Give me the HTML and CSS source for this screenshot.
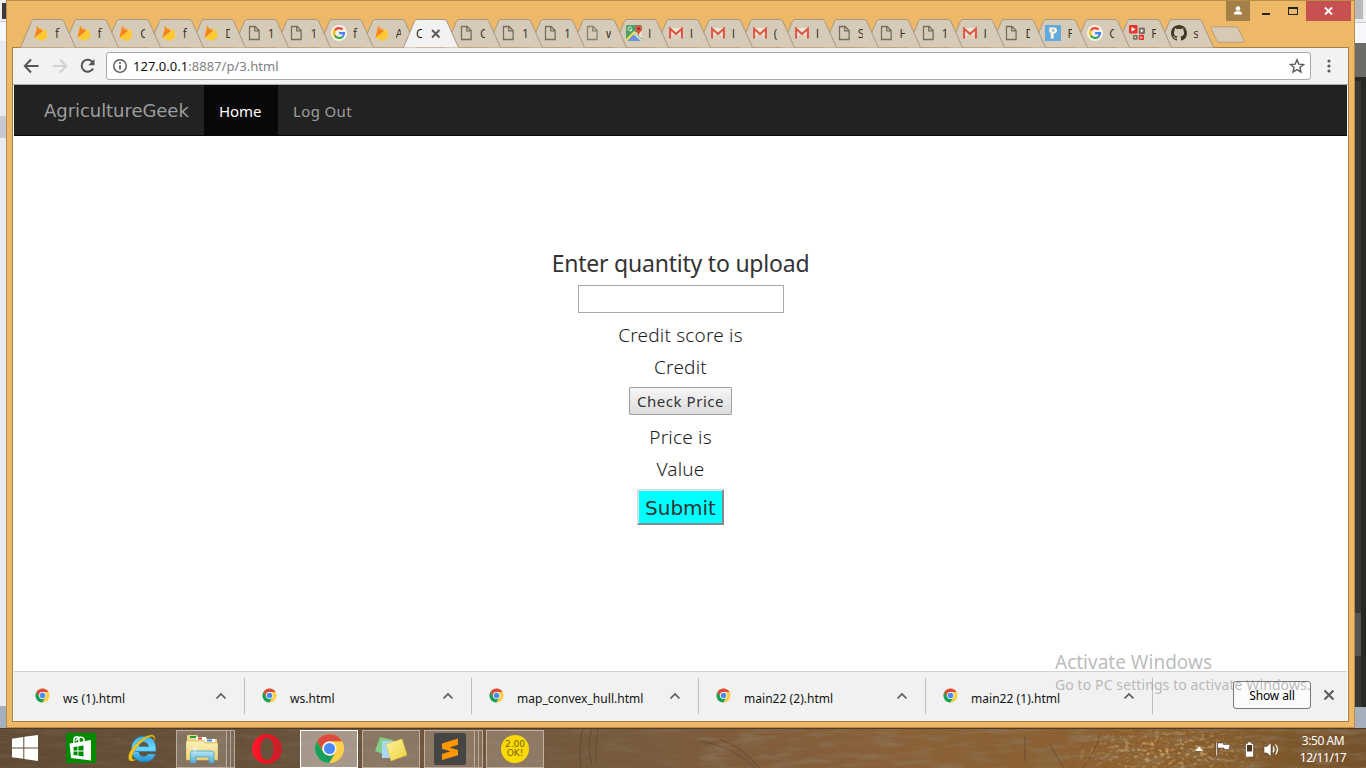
FILE: index.html
```html
<!DOCTYPE html>
<html lang="en">
<head>
<meta charset="utf-8">
<title>AgricultureGeek</title>
<link rel="stylesheet" href="styles.css">
</head>
<body>
<svg class="defs" width="0" height="0">
  <defs>
    <linearGradient id="opg" x1="0" x2="1"><stop offset="0" stop-color="#ff1b2d"/><stop offset=".3" stop-color="#f21425"/><stop offset="1" stop-color="#c5202b"/></linearGradient>
    <linearGradient id="ieg" x1="0" y1="0" x2="0" y2="1"><stop offset="0" stop-color="#3db4ea"/><stop offset=".5" stop-color="#6fd6fb"/><stop offset="1" stop-color="#1d8fd0"/></linearGradient>
    <linearGradient id="fol" x1="0" y1="0" x2="0" y2="1"><stop offset="0" stop-color="#fbf0b4"/><stop offset="1" stop-color="#ecd47a"/></linearGradient>
    <linearGradient id="stand" x1="0" y1="0" x2="0" y2="1"><stop offset="0" stop-color="#b9e6f8"/><stop offset="1" stop-color="#58a9cf"/></linearGradient>
    <linearGradient id="note" x1="0" y1="0" x2="1" y2="1"><stop offset="0" stop-color="#fbf3a0"/><stop offset="1" stop-color="#f0d23c"/></linearGradient>
    <symbol id="firebase" viewBox="0 0 16 16"><path d="M1.600 12.600 3.900 1c.1-.4.6-.5.8-.1l2.100 4 1.100-1.500c.2-.3.5-.3.7 0l5.100 9.200z" fill="#f89a1e"/><path d="M9.600 7.200 5 2.400 1.600 12.600z" fill="#f4811f"/><path d="m1.600 12.600 10.600-8.400c.3-.3.8-.1.9.3l1.500 8.100-5.700 3.100c-.4.2-.9.2-1.300 0z" fill="#fdc932"/></symbol>
    <symbol id="doc" viewBox="0 0 16 16"><path d="M3.500 1.500h5.600l4 4v9H3.500z M8.700 1.800v4h4" fill="none" stroke="#776e60" stroke-width="1.300"/></symbol>
    <symbol id="google" viewBox="0 0 16 16"><circle cx="8" cy="8" r="8" fill="#fbf1e2"/><path d="M3.900 5.300A5 5 0 0 1 11.600 4.500" fill="none" stroke="#ea4335" stroke-width="2.200"/><path d="M3.900 5.200a5 5 0 0 0 0 5.500" fill="none" stroke="#fbbc05" stroke-width="2.200"/><path d="M3.800 10.500a5 5 0 0 0 7.700 1.200" fill="none" stroke="#34a853" stroke-width="2.200"/><path d="M8.100 8.100H13A5 5 0 0 1 11.400 11.800" fill="none" stroke="#4285f4" stroke-width="2.200"/></symbol>
    <symbol id="maps" viewBox="0 0 16 16"><rect width="16" height="16" rx="1.500" fill="#4aa368"/><path d="m1 16 7-7 7 7z" fill="#6b94de"/><path d="m9 8 7 6V6h-4z" fill="#e8dfd0"/><path d="m0 15.500 9-9" stroke="#f6dc50" stroke-width="2.200"/><path d="m8 8.500 7.500 7" stroke="#f4efe4" stroke-width="1.400"/><path d="M5.700 2.800A2 2 0 1 0 6 4.400H4.300" stroke="#e7f3e4" fill="none"/><path d="M12.500 11c-.2-3-3.200-4.500-3.200-7.500a3.300 3.300 0 0 1 6.600 0c0 3-3.200 4.500-3.400 7.500z" fill="#de5543"/><circle cx="12.600" cy="3.600" r="1.200" fill="#83231c"/></symbol>
    <symbol id="gmail" viewBox="0 0 16 16"><path d="M1.500 3h13v10.500h-13z" fill="#efe3d2"/><path d="m1.500 13.500 5-5 1.500 1.200 1.500-1.200 5 5z" fill="#ddcfbb"/><path d="M2.100 13.500V3.800L8 9l5.900-5.200v9.700" fill="none" stroke="#dd5140" stroke-width="2"/></symbol>
    <symbol id="pin" viewBox="0 0 16 16"><rect width="16" height="16" fill="#62a9dc"/><path d="M5.700 13.500V8.500L4.300 6.500V2.500h5.200c3.400 0 3.400 6 0 6H8.700v5z" fill="#fff3df"/><path d="M7.300 4.300h1.900v2.300H7.300z" fill="#62a9dc"/></symbol>
    <symbol id="play" viewBox="0 0 16 16"><rect width="8.500" height="8.500" rx="1" fill="#e5352c"/><path d="m2.500 2 4.200 2.200-4.200 2.200z" fill="#fff"/><rect x="9.800" y="2.500" width="6.200" height="6.500" rx="1" fill="#7c6f60"/><path d="m11.700 4 3 1.800-3 1.800z" fill="#fff"/><rect x="4" y="10" width="4.700" height="4.700" rx="1" fill="#7c6f60"/><rect x="5.500" y="11.500" width="1.600" height="1.600" fill="#ddd"/><rect x="9.800" y="9.800" width="5.200" height="5.200" rx="1" fill="#e5352c"/><path d="m11.400 11.200 2.400 1.300-2.400 1.300z" fill="#fff"/></symbol>
    <symbol id="github" viewBox="0 0 16 16"><path d="M8 0C3.580 0 0 3.580 0 8c0 3.540 2.290 6.530 5.470 7.590.4.070.55-.17.55-.38 0-.19-.01-.82-.01-1.490-2.010.37-2.530-.49-2.690-.94-.09-.23-.48-.94-.82-1.130-.28-.15-.68-.52-.01-.53.63-.01 1.080.58 1.230.82.72 1.210 1.870.87 2.330.66.070-.52.28-.87.51-1.070-1.780-.2-3.640-.89-3.640-3.950 0-.87.31-1.590.82-2.150-.08-.2-.36-1.020.08-2.120 0 0 .67-.21 2.200.82a7.600 7.600 0 0 1 4 0c1.530-1.040 2.200-.82 2.200-.82.44 1.100.16 1.920.08 2.120.51.56.82 1.270.82 2.150 0 3.070-1.870 3.750-3.650 3.950.29.25.54.73.54 1.480 0 1.070-.01 1.930-.01 2.200 0 .21.15.46.55.38A8 8 0 0 0 16 8c0-4.420-3.580-8-8-8z" fill="#433728"/></symbol>
    <symbol id="chrome" viewBox="0 0 32 32"><circle cx="16" cy="16" r="15" fill="#fdd04b"/><path d="M3 8.500A15 15 0 0 1 29 8.500H16A7.500 7.500 0 0 0 9.500 19.700z" fill="#db4c3f"/><path d="M3 8.500A15 15 0 0 0 15.500 31l7-11.500A7.500 7.500 0 0 1 9.500 19.700z" fill="#16a05e"/><circle cx="16" cy="16" r="7.300" fill="#f6f6f6"/><circle cx="16" cy="16" r="5.700" fill="#4a8af4"/></symbol>
    <symbol id="tabshape" viewBox="0 0 56 29"><path d="M.5 28.500 11.500 2.300Q12.500 .5 14 .5H41Q43 .5 43.800 2.300L55.500 28.500" fill="var(--tab)" stroke="var(--edge)"/></symbol>
  </defs>
</svg>

<div class="desktop">
  <div class="behind-left"><i class="bl1"></i><i class="bl2"></i><i class="bl3"></i><i class="bl5"></i><i class="bl4"></i></div>
  <div class="behind-right"><i class="br1"></i><i class="br2"></i><i class="br3"></i><i class="br4"></i><i class="br5"></i></div>

  <div class="window">
    <div class="controls">
      <span class="user"><svg width="24" height="20"><circle cx="12" cy="7.500" r="2.300" fill="#fff"/><path d="M8 13.500v-1.200c0-2.600 8-2.600 8 0v1.200z" fill="#fff"/></svg></span>
      <span class="ctl min"><i></i></span>
      <span class="ctl max"><i></i></span>
      <span class="close"><svg width="10" height="10"><path d="m1 1.500 7 7m0-7-7 7" stroke="#fff" stroke-width="1.800"/></svg></span>
    </div>

    <div class="tabs">
      <div class="tab a"><svg class="shape"><use href="#tabshape"/></svg><svg class="fav"><use href="#firebase"/></svg><span>f</span></div>
      <div class="tab a"><svg class="shape"><use href="#tabshape"/></svg><svg class="fav"><use href="#firebase"/></svg><span>f</span></div>
      <div class="tab a"><svg class="shape"><use href="#tabshape"/></svg><svg class="fav"><use href="#firebase"/></svg><span>C</span></div>
      <div class="tab a"><svg class="shape"><use href="#tabshape"/></svg><svg class="fav"><use href="#firebase"/></svg><span>f</span></div>
      <div class="tab a"><svg class="shape"><use href="#tabshape"/></svg><svg class="fav"><use href="#firebase"/></svg><span>D</span></div>
      <div class="tab a"><svg class="shape"><use href="#tabshape"/></svg><svg class="fav"><use href="#doc"/></svg><span>1</span></div>
      <div class="tab a"><svg class="shape"><use href="#tabshape"/></svg><svg class="fav"><use href="#doc"/></svg><span>1</span></div>
      <div class="tab a"><svg class="shape"><use href="#tabshape"/></svg><svg class="fav"><use href="#google"/></svg><span>f</span></div>
      <div class="tab a"><svg class="shape"><use href="#tabshape"/></svg><svg class="fav"><use href="#firebase"/></svg><span>A</span></div>
      <div class="tab active"><svg class="shape"><use href="#tabshape"/></svg><span>C</span><svg class="x" width="10" height="10"><path d="m1 1 7.500 7.500m0-7.500L1 8.500" stroke="#5a5a5a" stroke-width="1.900"/></svg></div>
      <div class="tab b"><svg class="shape"><use href="#tabshape"/></svg><svg class="fav"><use href="#doc"/></svg><span>C</span></div>
      <div class="tab b"><svg class="shape"><use href="#tabshape"/></svg><svg class="fav"><use href="#doc"/></svg><span>1</span></div>
      <div class="tab b"><svg class="shape"><use href="#tabshape"/></svg><svg class="fav"><use href="#doc"/></svg><span>1</span></div>
      <div class="tab b dim"><svg class="shape"><use href="#tabshape"/></svg><svg class="fav"><use href="#doc"/></svg><span>w</span></div>
      <div class="tab b"><svg class="shape"><use href="#tabshape"/></svg><svg class="fav"><use href="#maps"/></svg><span>I</span></div>
      <div class="tab b"><svg class="shape"><use href="#tabshape"/></svg><svg class="fav"><use href="#gmail"/></svg><span>I</span></div>
      <div class="tab b"><svg class="shape"><use href="#tabshape"/></svg><svg class="fav"><use href="#gmail"/></svg><span>I</span></div>
      <div class="tab b"><svg class="shape"><use href="#tabshape"/></svg><svg class="fav"><use href="#gmail"/></svg><span>(</span></div>
      <div class="tab b"><svg class="shape"><use href="#tabshape"/></svg><svg class="fav"><use href="#gmail"/></svg><span>I</span></div>
      <div class="tab b"><svg class="shape"><use href="#tabshape"/></svg><svg class="fav"><use href="#doc"/></svg><span>S</span></div>
      <div class="tab b"><svg class="shape"><use href="#tabshape"/></svg><svg class="fav"><use href="#doc"/></svg><span>H</span></div>
      <div class="tab b"><svg class="shape"><use href="#tabshape"/></svg><svg class="fav"><use href="#doc"/></svg><span>1</span></div>
      <div class="tab b"><svg class="shape"><use href="#tabshape"/></svg><svg class="fav"><use href="#gmail"/></svg><span>I</span></div>
      <div class="tab b"><svg class="shape"><use href="#tabshape"/></svg><svg class="fav"><use href="#doc"/></svg><span>D</span></div>
      <div class="tab b"><svg class="shape"><use href="#tabshape"/></svg><svg class="fav"><use href="#pin"/></svg><span>F</span></div>
      <div class="tab b"><svg class="shape"><use href="#tabshape"/></svg><svg class="fav"><use href="#google"/></svg><span>C</span></div>
      <div class="tab b"><svg class="shape"><use href="#tabshape"/></svg><svg class="fav"><use href="#play"/></svg><span>F</span></div>
      <div class="tab b"><svg class="shape"><use href="#tabshape"/></svg><svg class="fav"><use href="#github"/></svg><span>s</span></div>
      <svg class="newtab" width="36" height="18"><path d="M2.500 .8H25.500Q27.500 .8 28.300 2.500L34 14.500Q34.500 16.300 33 16.300H9.500Q7.500 16.300 6.700 14.500L1 2.500Q.5 .8 2.500 .8z" fill="#d6cab6" stroke="#bb9f72"/></svg>
    </div>

    <div class="frame">
      <div class="toolbar">
        <svg class="nav-icons" width="90" height="36"><g fill="none" stroke-width="2"><path d="M25.500 18H12M18 11.500 11.800 18l6.200 6.500" stroke="#555"/><path d="M40 18h13.500M47 11.500l6.200 6.500-6.200 6.500" stroke="#d0d0d0"/><path d="M79.500 14.200A6 6 0 1 0 80 20.500" stroke="#555"/></g><path d="M81.500 11v6.200h-6.200z" fill="#555"/></svg>
        <div class="omnibox">
          <svg width="16" height="16"><circle cx="8" cy="8" r="6.300" fill="none" stroke="#5a5a5a" stroke-width="1.400"/><path d="M8 7.200v4.300M8 4.300V6" stroke="#5a5a5a" stroke-width="1.700"/></svg>
          <span class="url"><b>127.0.0.1</b>:8887/p/3.html</span>
          <svg class="star" width="16" height="16"><path d="m8 1.800 1.800 4.300 4.700.4-3.600 3 1.100 4.600L8 11.600l-4 2.500 1.100-4.600-3.600-3 4.700-.4z" fill="none" stroke="#5a5a5a" stroke-width="1.400"/></svg>
        </div>
        <svg class="menu" width="6" height="16"><g fill="#5a5a5a"><circle cx="3" cy="3" r="1.600"/><circle cx="3" cy="8" r="1.600"/><circle cx="3" cy="13" r="1.600"/></g></svg>
      </div>

      <nav class="navbar">
        <a class="brand">AgricultureGeek</a>
        <a class="item on">Home</a>
        <a class="item">Log Out</a>
      </nav>

      <main class="page">
        <div class="title">Enter quantity to upload</div>
        <input class="qty" type="text">
        <div class="line l1">Credit score is</div>
        <div class="line l2">Credit</div>
        <button class="check">Check Price</button>
        <div class="line l3">Price is</div>
        <div class="line l4">Value</div>
        <button class="submit">Submit</button>
      </main>

      <div class="shelf">
        <div class="dl"><svg class="ci"><use href="#chrome"/></svg><span>ws (1).html</span><svg class="up" width="12" height="8"><path d="m1.500 6.500 4.500-4.500 4.500 4.500" fill="none" stroke="#5a5a5a" stroke-width="1.700"/></svg></div>
        <div class="dl"><svg class="ci"><use href="#chrome"/></svg><span>ws.html</span><svg class="up" width="12" height="8"><path d="m1.500 6.500 4.500-4.500 4.500 4.500" fill="none" stroke="#5a5a5a" stroke-width="1.700"/></svg></div>
        <div class="dl"><svg class="ci"><use href="#chrome"/></svg><span>map_convex_hull.html</span><svg class="up" width="12" height="8"><path d="m1.500 6.500 4.500-4.500 4.500 4.500" fill="none" stroke="#5a5a5a" stroke-width="1.700"/></svg></div>
        <div class="dl"><svg class="ci"><use href="#chrome"/></svg><span>main22 (2).html</span><svg class="up" width="12" height="8"><path d="m1.500 6.500 4.500-4.500 4.500 4.500" fill="none" stroke="#5a5a5a" stroke-width="1.700"/></svg></div>
        <div class="dl"><svg class="ci"><use href="#chrome"/></svg><span>main22 (1).html</span><svg class="up" width="12" height="8"><path d="m1.500 6.500 4.500-4.500 4.500 4.500" fill="none" stroke="#5a5a5a" stroke-width="1.700"/></svg></div>
        <button class="showall">Show all</button>
        <svg class="sx" width="12" height="12"><path d="m1.500 1.500 9 9m0-9-9 9" stroke="#5a5a5a" stroke-width="2"/></svg>
      </div>
    </div>
  </div>

  <div class="watermark"><div class="w1">Activate Windows</div><div class="w2">Go to PC settings to activate Windows.</div></div>

  <div class="taskbar">
    <svg class="wall" width="1366" height="40">
      <defs>
        <filter id="grain" x="0" y="0" width="1" height="1"><feTurbulence type="fractalNoise" baseFrequency=".03 .16" numOctaves="5" seed="8"/><feColorMatrix values="0 0 0 0 .27  0 0 0 0 .2  0 0 0 0 .12  2.600 0 0 0 -1.150"/></filter>
        <filter id="leaf" x="0" y="0" width="1" height="1"><feTurbulence type="fractalNoise" baseFrequency=".2 .3" numOctaves="3" seed="4"/><feColorMatrix values="0 0 0 0 .8  0 0 0 0 .5  0 0 0 0 .22  0 5 0 0 -2.600"/></filter>
        <radialGradient id="fade"><stop offset="0" stop-color="#fff"/><stop offset="1" stop-color="#000"/></radialGradient>
        <mask id="lm"><ellipse cx="1170" cy="22" rx="120" ry="30" fill="url(#fade)"/></mask>
      </defs>
      <rect width="1366" height="40" filter="url(#grain)" opacity=".25"/>
      <rect x="700" width="666" height="40" filter="url(#grain)" opacity=".4"/>
      <g mask="url(#lm)"><rect x="1000" width="366" height="40" filter="url(#leaf)" opacity=".75"/></g>
      <g fill="none" stroke="#4a3624" opacity=".45"><path d="M583 0q-5 15-2 40M592 0q-6 15 0 35M598 0q-3 15-2 34M700 12q30 4 57 28M720 10q25 10 40 30M1050 15l14 25M1100 5q-4 18-18 35M1025 8v24"/></g>
    </svg>
    <div class="slot start"><svg width="26" height="26"><path d="M0 3.700 11.300 2v10.400H0zM12.300 1.800 26 0v12.400H12.300zM0 13.500h11.300v10.300L0 22.200zM12.300 13.500H26V26l-13.700-1.900z" fill="#fff"/></svg></div>
    <div class="slot store"><svg width="30" height="30"><rect width="30" height="30" fill="#008a00"/><path d="M3.500 10.500 25 7v20.500L5 25z" fill="#fff"/><path d="M8 11V6.500c0-3 5-4 5-.5V9M10 8c1-4 8-5.500 8-1v3" fill="none" stroke="#fff" stroke-width="1.500"/><path d="m7.500 14 4-.6v4.100h-4zm4.900-.7 5.100-.8v5h-5.100zM7.500 18.400h4v4.100l-4-.5zm4.900 0h5.100v5l-5.100-.7z" fill="#008a00"/></svg></div>
    <div class="slot ie"><svg width="30" height="30"><path d="M8 18.500H28.800C30 9 25 3.200 17 3.200 9 3.200 4.500 9 4.500 16c0 8 5.500 13 12.500 13 6 0 10-3 11.500-8H21c-2 4-9 3-9-2.500zm4-5C12.500 7.500 21 7.500 21.500 13.500z" fill="url(#ieg)" stroke="#1b78b4" stroke-width=".5"/><path d="M27 8c3-6-2-9-12-2C5 13 0 22 2 26.500c1 2 4 2 7 0-4 1-5-1-3-6C9 13 18 5 24 3.500c3-.5 3.500 1 3 4.500z" fill="#f5c61d" stroke="#c08d0d" stroke-width=".4"/></svg></div>
    <div class="slot btn explorer"><svg width="32" height="31"><path d="M1 6V3q0-1 1-1h9l1 2h8l1 2h9q1 0 1 1v20H1z" fill="#ecd584"/><path d="M4 3h6v2H4z" fill="#1da637"/><path d="M10 4h10v3H10zM19 6h10v3H19z" fill="#fff"/><path d="M12 4.500h4v2h-4z" fill="#d6402b"/><path d="M21 6.500h5v2h-5z" fill="#2f8ed8"/><path d="M0 8h18l1 2h13v17H0z" fill="url(#fol)" stroke="#d6b95c" stroke-width=".7"/><path d="M4.500 30V20q0-2 2-2H26q2 0 2 2v10h-5v-6H10v6z" fill="url(#stand)" stroke="#4c9fc4" stroke-width=".8"/><path d="m9 11 .6 4.400 4.400.6-4.400.6L9 21l-.6-4.400L4 16l4.400-.6z" fill="#eafcff"/></svg></div>
    <i class="stack"></i><i class="stack"></i>
    <div class="slot opera"><svg width="30" height="30"><circle cx="15" cy="15" r="15" fill="url(#opg)"/><ellipse cx="15" cy="15" rx="6.700" ry="11.300" fill="#69523a"/></svg></div>
    <div class="slot btn current"><svg width="31" height="31"><use href="#chrome"/></svg></div>
    <div class="slot btn notes"><svg width="32" height="26"><path d="m5 1 13 3-5 16L0 15z" fill="#83cf86"/><path d="M7 5h13v17H7z" fill="#a9d7f8"/><path d="m11 8 16-5 5 16-16 6z" fill="url(#note)" stroke="#dfc133" stroke-width=".5"/></svg></div>
    <div class="slot btn sublime"><svg width="32" height="32"><rect width="32" height="32" rx="2" fill="#454545"/><path d="M8 10.500 24 5.500v6.200l-8.500 2.700 8.500 2.600v5.200L8 27v-6l8.500-2.700L8 15.700z" fill="#ff9800"/></svg></div>
    <i class="stack"></i><i class="stack"></i>
    <div class="slot btn ok"><div class="badge"><span>2.00</span><span>OK!</span></div></div>
    <div class="tray">
      <svg width="90" height="20"><path d="m2 12 4-4.500 4 4.500z" fill="#fff"/><g stroke="#3b2a1a" stroke-width=".5" fill="#fff"><path d="M23 3h1.500v14H23zM24.500 4h6v1.500h6.500l-1 5h-5V9h-6.500z"/><path d="M52.500 4.500h2V3h4v1.500h2v13.500h-8z"/><path d="M71 7.500h3L78 3.500v14L74 14h-3z"/></g><path d="M54 6h5v6.500h-5z" fill="#4d351d"/><path d="M80 7.500q2 3 0 6M82.500 5.500q4 5 0 10" stroke="#fff" fill="none" stroke-width="1.200"/></svg>
      <div class="clock"><span>3:50 AM</span><span>12/11/17</span></div>
    </div>
  </div>
</div>
</body>
</html>
```
FILE: styles.css
```css
* { box-sizing: border-box; }
body { margin: 0; overflow: hidden; font-family: "Noto Sans", "Open Sans", sans-serif; }
.defs { position: absolute; }
.desktop { position: relative; width: 1366px; height: 768px; background: #e9eaef; display: flex; flex-direction: column; justify-content: space-between; padding-left: 6px; }
i { display: block; }

.behind-left { position: absolute; left: 0; top: 0; width: 7px; height: 728px; background: #e9eaef; }
.bl1 { height: 22px; border-bottom: 1px solid #ccc; background: linear-gradient(#3a3a3a, #3a3a3a) 2px 3px / 5px 16px no-repeat #eee; }
.bl2 { height: 19px; background: #f6f7fa; }
.bl3 { height: 22px; margin-top: 75px; background: #c5c9d3; }
.bl5 { height: 568px; }
.bl4 { height: 22px; background: #a5afbd; }
.behind-right { position: absolute; right: 0; top: 0; width: 12px; height: 728px; background: #272822; }
.br1 { height: 23px; border-bottom: 1px solid #ccc; background: linear-gradient(#b8b8b8, #b8b8b8) 0 0 / 9px 19px no-repeat #eee; }
.br2 { height: 20px; background: #f6f7fa; }
.br3 { height: 34px; background: #6b6c67; }
.br4 { width: 7px; height: 626px; margin-top: 4px; background: linear-gradient(#545551, #545551) 0 532px / 7px 43px no-repeat #383933; }
.br5 { height: 22px; background: #a5afbd; }

.window { position: relative; width: 1349px; height: 728px; background: #edb867; border: 1px solid #b98d49; }
.controls { position: absolute; top: 0; right: 3px; display: flex; align-items: flex-start; height: 20px; }
.user { width: 24px; height: 20px; background: #a47f47; }
.user svg { display: block; }
.ctl { width: 28px; height: 20px; }
.min { padding: 12px 0 0 12px; }
.min i { width: 8px; height: 2px; background: #222; }
.max { padding: 6px 0 0 10px; }
.max i { width: 10px; height: 8px; border: 1px solid #222; border-top-width: 2px; }
.close { width: 45px; height: 20px; background: #c75050; display: flex; align-items: center; justify-content: center; }

.tabs { display: flex; padding: 18px 0 0 13px; height: 47px; }
.tab { --tab: #d6cab8; --edge: #a8987f; position: relative; width: 56px; height: 29px; flex: none; padding: 6px 0 0 13px; display: flex; }
.a { margin-right: -13.450px; }
.b { margin-right: -14.050px; }
.active { --tab: #f2f2f2; width: 55px; margin-right: -13px; z-index: 40; }
.shape { position: absolute; left: 0; top: 0; width: 56px; height: 29px; }
.fav { position: relative; width: 16px; height: 16px; flex: none; }
.tab span { position: relative; width: 5px; height: 18px; overflow: hidden; margin: 0 0 0 6px; font: 12px/17px "Open Sans", sans-serif; color: #33302a; }
.tab.active span { margin-left: 0; width: 6px; color: #111; }
.dim .fav { opacity: .8; }
.x { position: relative; margin: 4px 0 0 9px; }
.tab:nth-child(1) { z-index: 30; } .tab:nth-child(2) { z-index: 29; } .tab:nth-child(3) { z-index: 28; } .tab:nth-child(4) { z-index: 27; }
.tab:nth-child(5) { z-index: 26; } .tab:nth-child(6) { z-index: 25; } .tab:nth-child(7) { z-index: 24; } .tab:nth-child(8) { z-index: 23; }
.tab:nth-child(9) { z-index: 22; } .tab:nth-child(11) { z-index: 20; } .tab:nth-child(12) { z-index: 19; } .tab:nth-child(13) { z-index: 18; }
.tab:nth-child(14) { z-index: 17; } .tab:nth-child(15) { z-index: 16; } .tab:nth-child(16) { z-index: 15; } .tab:nth-child(17) { z-index: 14; }
.tab:nth-child(18) { z-index: 13; } .tab:nth-child(19) { z-index: 12; } .tab:nth-child(20) { z-index: 11; } .tab:nth-child(21) { z-index: 10; }
.tab:nth-child(22) { z-index: 9; } .tab:nth-child(23) { z-index: 8; } .tab:nth-child(24) { z-index: 7; } .tab:nth-child(25) { z-index: 6; }
.tab:nth-child(26) { z-index: 5; } .tab:nth-child(27) { z-index: 4; } .tab:nth-child(28) { z-index: 3; }
.newtab { margin: 7px 0 0 10px; flex: none; }

.frame { position: relative; margin: -1px 5px 0 5px; height: 675px; border: 1px solid #a67f43; padding: 0 1px; background: #fff; display: flex; flex-direction: column; }
.toolbar { margin: 0 -1px; height: 37px; flex: none; background: #f2f2f2; border-bottom: 1px solid #a9a9a9; display: flex; align-items: center; }
.nav-icons { flex: none; }
.omnibox { margin-left: 3px; width: 1205px; height: 28px; border: 1px solid #a9a9a9; border-radius: 3px; background: #fff; display: flex; align-items: center; padding: 0 5px; }
.url { margin-left: 5px; font-size: 13px; color: #808080; letter-spacing: .020px; }
.url b { font-weight: 400; color: #111; }
.star { margin-left: auto; }
.menu { margin-left: 15px; }

.navbar { height: 51px; flex: none; background: #222; border-bottom: 1px solid #080808; display: flex; font-family: "DejaVu Sans", sans-serif; font-size: 15px; color: #9d9d9d; }
.brand { padding: 0 15px 0 30px; width: 190px; font-size: 18px; line-height: 51px; white-space: nowrap; letter-spacing: -.050px; }
.item { padding: 1px 15px 0; line-height: 50px; font: 15px/50px "Noto Sans", sans-serif; letter-spacing: .350px; }
.on { background: #080808; color: #fff; width: 74px; letter-spacing: -.100px; }

.page { flex: 1; display: flex; flex-direction: column; align-items: center; padding-top: 112px; color: #333; }
.title { height: 32px; line-height: 31px; font-size: 23px; white-space: nowrap; letter-spacing: -.220px; }
.qty { margin-top: 5px; width: 206px; height: 28px; border: 1px solid #a9a9a9; padding: 0; }
.line { height: 32px; line-height: 32px; font-size: 19px; font-weight: 300; color: #1c1c1c; letter-spacing: .200px; }
.l1, .l3 { margin-top: 6px; }
.check { margin-top: 4px; width: 103px; height: 28px; border: 1px solid #a0a0a0; border-radius: 1px; background: linear-gradient(#f6f6f6, #dcdcdc); padding: 0; font: 15px "Noto Sans", sans-serif; letter-spacing: .550px; color: #333; }
.submit { margin-top: 4px; width: 87px; height: 36px; border: 2px outset #ddd; background: #0ff; padding: 2px 0 0; font: 20px "DejaVu Sans", sans-serif; color: #333; }

.shelf { height: 50px; flex: none; background: #f1f1f1; border-top: 1px solid #d0d0d0; display: flex; align-items: center; font-size: 12px; color: #111; }
.dl { width: 227px; height: 36px; margin-top: -1px; border-right: 1px solid #bebebe; display: flex; padding-left: 17px; }
.dl:first-child { width: 231px; padding-left: 21px; }
.ci { width: 15px; height: 15px; margin-top: 10px; }
.dl span { margin: 12px 0 0 13px; line-height: 17px; letter-spacing: .040px; }
.up { margin: 14px 17px 0 auto; }
.showall { margin: -3px 0 0 80px; width: 78px; height: 28px; border: 1px solid #777; border-radius: 3px; background: #fbfbfb; padding: 0; font: 12px "Noto Sans", sans-serif; letter-spacing: -.100px; color: #000; }
.sx { margin: -3px 0 0 12px; }

.watermark { position: absolute; left: 1055px; top: 648px; z-index: 50; color: rgba(150,150,150,.65); white-space: nowrap; }
.w1 { font-size: 19px; line-height: 28px; }
.w2 { font-size: 14px; line-height: 18px; letter-spacing: .100px; }

.taskbar { position: relative; width: 1366px; height: 40px; margin-left: -6px; border-top: 1px solid #4e3a26; background: linear-gradient(90deg, #5f4b36, #6a533b 25%, #765a3e 45%, #8a6038 65%, #8c602f 85%, #74512a); display: flex; align-items: center; }
.wall { position: absolute; left: 0; top: 0; }
.slot { position: relative; display: flex; align-items: center; justify-content: center; height: 39px; flex: none; }
.start { margin-left: 12px; width: 26px; top: -1px; }
.store { margin-left: 28px; width: 30px; top: -1px; }
.ie { margin-left: 31px; width: 30px; top: -1px; }
.btn { width: 58px; height: 38px; border: 1px solid rgba(255,255,255,.42); background: rgba(255,255,255,.2); }
.explorer { margin-left: 19px; width: 51px; }
.stack { position: relative; width: 4px; height: 38px; border: solid rgba(255,255,255,.42); border-width: 1px 1px 1px 0; background: rgba(255,255,255,.15); }
.opera { margin-left: 17px; width: 30px; }
.current { margin-left: 18px; border: 1px solid #fff; background: rgba(255,255,255,.4); }
.notes { margin-left: 4px; }
.sublime { margin-left: 4px; width: 51px; }
.ok { margin-left: 3px; }
.badge { width: 28px; height: 28px; border-radius: 50%; background: #fbd906; display: flex; flex-direction: column; align-items: center; justify-content: center; font: 9px/9px "DejaVu Sans", sans-serif; color: #756405; }
.tray { position: relative; margin-left: auto; display: flex; align-items: center; padding-right: 19px; }
.clock { width: 48px; margin-left: 16px; display: flex; flex-direction: column; align-items: center; color: #fff; font-size: 12px; line-height: 17px; white-space: nowrap; letter-spacing: -.450px; }
```
